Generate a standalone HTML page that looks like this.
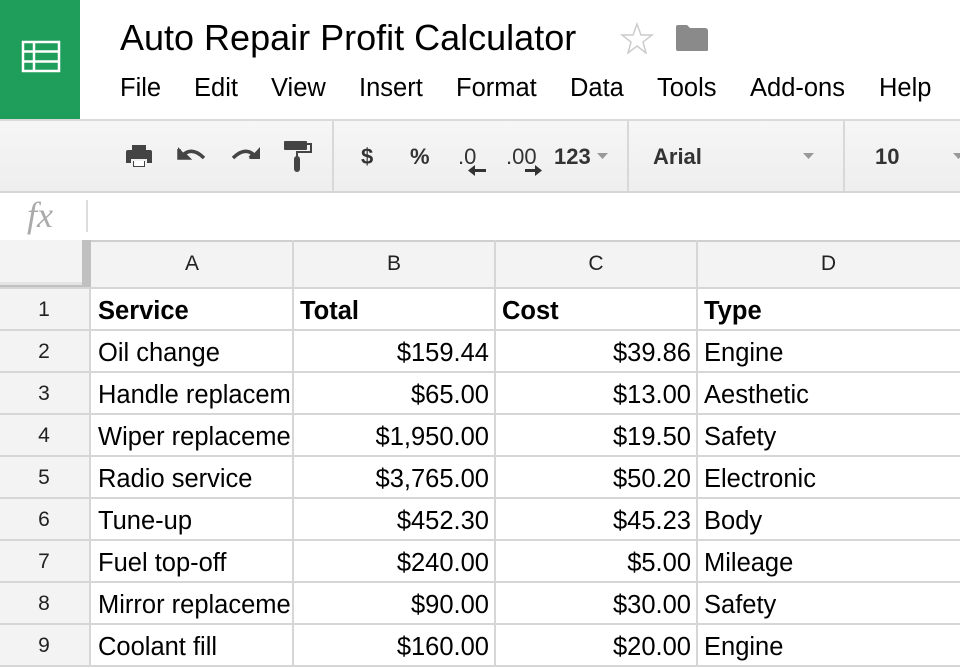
<!DOCTYPE html>
<html><head><meta charset="utf-8"><style>
*{margin:0;padding:0;box-sizing:border-box}
body{width:960px;height:667px;overflow:hidden;background:#fff;font-family:"Liberation Sans",Arial,sans-serif;position:relative}
.a{position:absolute}
.logo{left:0;top:0;width:80px;height:119px;background:#1f9d5a}
.title{left:120px;top:17px;font-size:36px;color:#000}
.menu{top:74px;font-size:25.5px;color:#000}
.tb{left:0;top:119px;width:960px;height:74px;background:linear-gradient(#f6f6f6,#eeeeee);border-top:2px solid #dadada;border-bottom:2px solid #d6d6d6}
.sep{top:121px;width:2px;height:70px;background:#d8d8d8}
.tt{top:144px;font-size:22px;font-weight:bold;color:#333}
.hl{position:absolute;left:0;width:960px;height:2px;background:#d6d6d6}
.vl{position:absolute;width:2px;background:#d6d6d6}
.cell{position:absolute;top:2px;font-size:25.5px;color:#000;line-height:42px;white-space:nowrap;overflow:hidden}
.rn{position:absolute;left:0;top:1px;width:88px;text-align:center;font-size:21px;line-height:42px;color:#222}
.ch{position:absolute;top:252px;font-size:21px;color:#222;text-align:center}
</style></head><body>
<div class="a logo"><svg width="80" height="119"><g stroke="#fff" stroke-width="2.5" fill="none"><rect x="23" y="42" width="36" height="29"/><line x1="34" y1="42" x2="34" y2="71"/><line x1="23" y1="51.5" x2="59" y2="51.5"/><line x1="23" y1="61.5" x2="59" y2="61.5"/></g></svg></div>
<div class="a title">Auto Repair Profit Calculator</div>
<svg class="a" style="left:620px;top:22px" width="34" height="32"><polygon points="17,2 21,13 32,13 23,20 26,31 17,24 8,31 11,20 2,13 13,13" fill="none" stroke="#ccc" stroke-width="1.5"/></svg>
<svg class="a" style="left:675px;top:24px" width="34" height="28"><path d="M1 3 Q1 1 3 1 L12 1 L15 4 L30 4 Q33 4 33 7 L33 26 Q33 27 31 27 L3 27 Q1 27 1 25 Z" fill="#8a8a8a"/></svg>
<div class="a menu" style="left:120px">File</div>
<div class="a menu" style="left:194px">Edit</div>
<div class="a menu" style="left:271px">View</div>
<div class="a menu" style="left:359px">Insert</div>
<div class="a menu" style="left:456px">Format</div>
<div class="a menu" style="left:570px">Data</div>
<div class="a menu" style="left:657px">Tools</div>
<div class="a menu" style="left:750px">Add-ons</div>
<div class="a menu" style="left:879px">Help</div>
<div class="a tb"></div>
<div class="a sep" style="left:332px"></div>
<div class="a sep" style="left:627px"></div>
<div class="a sep" style="left:843px"></div>
<svg class="a" style="left:124px;top:143px" width="32" height="30"><rect x="8" y="2" width="14" height="5" fill="#444"/><path d="M2 9 Q2 7 4 7 L26 7 Q28 7 28 9 L28 20 L23 20 L23 16 L7 16 L7 20 L2 20 Z" fill="#444"/><rect x="9" y="18" width="12" height="6" fill="#444"/><rect x="10" y="18" width="10" height="5" fill="#fff"/></svg>
<svg class="a" style="left:176px;top:142px" width="34" height="26"><path d="M3 7 L3 16 L12 16 L8 12 Q17 5 28 16" fill="none" stroke="#444" stroke-width="3.5"/><path d="M2 5 L2 17 L13 17 Z" fill="#444"/></svg>
<svg class="a" style="left:228px;top:142px" width="34" height="26"><path d="M5 16 Q16 5 25 12 L22 16" fill="none" stroke="#444" stroke-width="3.5"/><path d="M32 5 L32 17 L21 17 Z" fill="#444"/></svg>
<svg class="a" style="left:282px;top:140px" width="32" height="36"><rect x="2" y="1" width="23" height="9" rx="1" fill="#444"/><path d="M25 4 L29 4 L29 12 L15 12 L15 17" fill="none" stroke="#444" stroke-width="2"/><rect x="12" y="16" width="6" height="16" rx="3" fill="#444"/></svg>
<div class="a tt" style="left:361px">$</div>
<div class="a tt" style="left:410px">%</div>
<div class="a tt" style="left:458px;font-weight:normal">.0</div>
<div class="a" style="left:472px;top:169px;width:14px;height:3px;background:#333"></div><svg class="a" style="left:468px;top:165px" width="8" height="11"><path d="M7 0 L0 5.5 L7 11Z" fill="#333"/></svg>
<div class="a tt" style="left:506px;font-weight:normal">.00</div>
<div class="a" style="left:525px;top:169px;width:13px;height:3px;background:#333"></div><svg class="a" style="left:535px;top:165px" width="8" height="11"><path d="M0 0 L7 5.5 L0 11Z" fill="#333"/></svg>
<div class="a tt" style="left:554px">123</div>
<svg class="a" style="left:597px;top:153px" width="12" height="7"><path d="M0 0 L11 0 L5.5 6Z" fill="#999"/></svg>
<div class="a tt" style="left:653px">Arial</div>
<svg class="a" style="left:803px;top:153px" width="12" height="7"><path d="M0 0 L11 0 L5.5 6Z" fill="#999"/></svg>
<div class="a tt" style="left:875px">10</div>
<svg class="a" style="left:953px;top:153px" width="12" height="7"><path d="M0 0 L11 0 L5.5 6Z" fill="#999"/></svg>
<div class="a" style="left:27px;top:194px;font-family:'Liberation Serif',serif;font-style:italic;font-size:36px;color:#aaa">fx</div>
<div class="a" style="left:86px;top:200px;width:2px;height:32px;background:#ddd"></div>
<div class="a" style="left:0;top:240px;width:960px;height:48px;background:#f3f3f3"></div>
<div class="a" style="left:0;top:288px;width:91px;height:379px;background:#f3f3f3"></div>
<div class="a" style="left:0;top:240px;width:960px;height:2px;background:#cfcfcf"></div>
<div class="a" style="left:82px;top:240px;width:9px;height:48px;background:#c0c0c0"></div>
<div class="a" style="left:0;top:282px;width:91px;height:6px;background:#c0c0c0"></div>
<div class="a" style="left:0;top:240px;width:82px;height:42px;background:#f3f3f3"></div>
<div class="a" style="left:0;top:282px;width:82px;height:3px;background:#e4e4e4"></div>
<div class="ch" style="left:91px;width:202px">A</div>
<div class="ch" style="left:293px;width:202px">B</div>
<div class="ch" style="left:495px;width:202px">C</div>
<div class="ch" style="left:697px;width:263px">D</div>
<div class="vl" style="left:292px;top:240px;height:427px"></div>
<div class="vl" style="left:494px;top:240px;height:427px"></div>
<div class="vl" style="left:696px;top:240px;height:427px"></div>
<div class="vl" style="left:89px;top:288px;height:379px"></div>
<div class="hl" style="top:287px"></div>
<div class="hl" style="top:329px"></div>
<div class="hl" style="top:371px"></div>
<div class="hl" style="top:413px"></div>
<div class="hl" style="top:455px"></div>
<div class="hl" style="top:497px"></div>
<div class="hl" style="top:539px"></div>
<div class="hl" style="top:581px"></div>
<div class="hl" style="top:623px"></div>
<div class="hl" style="top:665px"></div>
<div style="position:absolute;left:0;top:288px;width:960px">
<div style="position:relative;height:42px"><div class="rn">1</div><div class="cell" style="left:98px;width:193px;font-weight:bold">Service</div><div class="cell" style="left:300px;font-weight:bold">Total</div><div class="cell" style="left:502px;font-weight:bold">Cost</div><div class="cell" style="left:704px;font-weight:bold">Type</div></div>
<div style="position:relative;height:42px"><div class="rn">2</div><div class="cell" style="left:98px;width:193px">Oil change</div><div class="cell" style="right:471px">$159.44</div><div class="cell" style="right:269px">$39.86</div><div class="cell" style="left:704px">Engine</div></div>
<div style="position:relative;height:42px"><div class="rn">3</div><div class="cell" style="left:98px;width:193px">Handle replacement</div><div class="cell" style="right:471px">$65.00</div><div class="cell" style="right:269px">$13.00</div><div class="cell" style="left:704px">Aesthetic</div></div>
<div style="position:relative;height:42px"><div class="rn">4</div><div class="cell" style="left:98px;width:193px">Wiper replacement</div><div class="cell" style="right:471px">$1,950.00</div><div class="cell" style="right:269px">$19.50</div><div class="cell" style="left:704px">Safety</div></div>
<div style="position:relative;height:42px"><div class="rn">5</div><div class="cell" style="left:98px;width:193px">Radio service</div><div class="cell" style="right:471px">$3,765.00</div><div class="cell" style="right:269px">$50.20</div><div class="cell" style="left:704px">Electronic</div></div>
<div style="position:relative;height:42px"><div class="rn">6</div><div class="cell" style="left:98px;width:193px">Tune-up</div><div class="cell" style="right:471px">$452.30</div><div class="cell" style="right:269px">$45.23</div><div class="cell" style="left:704px">Body</div></div>
<div style="position:relative;height:42px"><div class="rn">7</div><div class="cell" style="left:98px;width:193px">Fuel top-off</div><div class="cell" style="right:471px">$240.00</div><div class="cell" style="right:269px">$5.00</div><div class="cell" style="left:704px">Mileage</div></div>
<div style="position:relative;height:42px"><div class="rn">8</div><div class="cell" style="left:98px;width:193px">Mirror replacement</div><div class="cell" style="right:471px">$90.00</div><div class="cell" style="right:269px">$30.00</div><div class="cell" style="left:704px">Safety</div></div>
<div style="position:relative;height:42px"><div class="rn">9</div><div class="cell" style="left:98px;width:193px">Coolant fill</div><div class="cell" style="right:471px">$160.00</div><div class="cell" style="right:269px">$20.00</div><div class="cell" style="left:704px">Engine</div></div>
</div>
</body></html>
